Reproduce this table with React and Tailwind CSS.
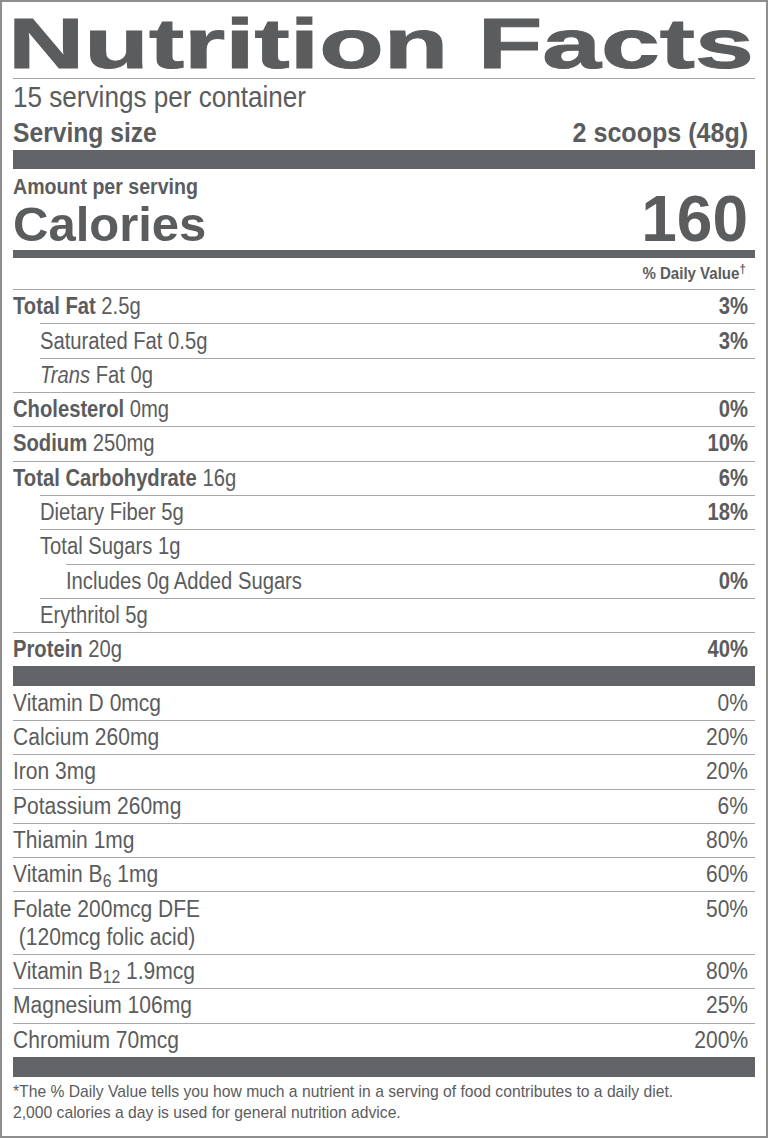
import React from "react";

// Helvetica Condensed look: Liberation Sans squeezed horizontally
const L = ({ children, className = "scale-x-[0.86]" }) => (
  <span className={`inline-block origin-left whitespace-nowrap ${className}`}>{children}</span>
);
const R = ({ children, className = "scale-x-[0.86]" }) => (
  <span className={`inline-block origin-right whitespace-nowrap ${className}`}>{children}</span>
);

const nutrients = [
  { name: "Total Fat", amount: "2.5g", dv: "3%", bold: true },
  { name: "Saturated Fat 0.5g", dv: "3%", indent: 1 },
  { name: "Trans", italic: true, amount: "Fat 0g", indent: 1 },
  { name: "Cholesterol", amount: "0mg", dv: "0%", bold: true },
  { name: "Sodium", amount: "250mg", dv: "10%", bold: true },
  { name: "Total Carbohydrate", amount: "16g", dv: "6%", bold: true },
  { name: "Dietary Fiber 5g", dv: "18%", indent: 1 },
  { name: "Total Sugars 1g", indent: 1 },
  { name: "Includes 0g Added Sugars", dv: "0%", indent: 2 },
  { name: "Erythritol 5g", indent: 1 },
  { name: "Protein", amount: "20g", dv: "40%", bold: true },
];

const vitamins = [
  { label: "Vitamin D 0mcg", dv: "0%" },
  { label: "Calcium 260mg", dv: "20%" },
  { label: "Iron 3mg", dv: "20%" },
  { label: "Potassium 260mg", dv: "6%" },
  { label: "Thiamin 1mg", dv: "80%" },
  { label: <>Vitamin B<sub>6</sub> 1mg</>, dv: "60%" },
  { label: "Folate 200mcg DFE", sub: "\u00a0(120mcg folic acid)", dv: "50%" },
  { label: <>Vitamin B<sub>12</sub> 1.9mcg</>, dv: "80%" },
  { label: "Magnesium 106mg", dv: "25%" },
  { label: "Chromium 70mcg", dv: "200%" },
];

const indentClass = ["ml-0", "ml-[27px]", "ml-[53px]"];

const NutrientRow = ({ item }) => (
  <div
    className={`flex justify-between items-center h-[34.3px] border-t border-[#a8a8a8] pr-[7px] ${indentClass[item.indent || 0]}`}
  >
    <L>
      {item.bold ? (
        <span className="font-bold">{item.name}</span>
      ) : item.italic ? (
        <span className="italic">{item.name}</span>
      ) : (
        item.name
      )}
      {item.amount && ` ${item.amount}`}
    </L>
    {item.dv && <R className="scale-x-[0.86] font-bold">{item.dv}</R>}
  </div>
);

const App = () => {
  return (
    <div className="w-[768px] h-[1138px] bg-white border-2 border-[#8e8e8e] px-[11px] text-[#5b5c5e] font-['Liberation_Sans',Arial,sans-serif] overflow-hidden">
      <div className="mt-[7px] h-[70px] border-b border-[#a8a8a8]">
        <div className="-ml-[5px] font-bold text-[70px] leading-[70px] scale-x-[1.51] origin-left whitespace-nowrap [-webkit-text-stroke:1px_#5b5c5e]">
          Nutrition Facts
        </div>
      </div>

      <div className="text-[29px] leading-[36.6px]">
        <L className="scale-x-[0.9]">15 servings per container</L>
      </div>
      <div className="flex justify-between text-[28px] leading-[34.4px] font-bold pr-[7px]">
        <L className="scale-x-[0.88]">Serving size</L>
        <R className="scale-x-[0.895]">2 scoops (48g)</R>
      </div>

      <div className="h-[19px] bg-[#636467]" />

      <div className="mt-[6.7px] text-[22px] leading-[21px] font-bold">
        <L className="scale-x-[0.89]">Amount per serving</L>
      </div>
      <div className="-mt-[3.5px] flex justify-between items-baseline pr-[7px] font-bold leading-[52px]">
        <span className="text-[49px]">Calories</span>
        <span className="text-[64px]">160</span>
      </div>

      <div className="h-[8px] bg-[#636467]" />

      <div className="text-right text-[17px] leading-[31px] font-bold pr-[9px]">
        <R className="scale-x-[0.885]">
          % Daily Value<sup>†</sup>
        </R>
      </div>

      <div className="text-[23.5px]">
        {nutrients.map((item, index) => (
          <NutrientRow key={index} item={item} />
        ))}
      </div>

      <div className="h-[20px] bg-[#636467]" />

      <div className="text-[23.5px]">
        {vitamins.map((v, index) => (
          <div
            key={index}
            className={`flex justify-between pr-[7px] ${index > 0 ? "border-t border-[#a8a8a8]" : ""} ${
              v.sub
                ? "h-[62.5px] pt-[3px] leading-[28px]"
                : index === 0
                ? "h-[33.5px] items-center"
                : "h-[34.3px] items-center"
            }`}
          >
            <span>
              <L className="scale-x-[0.895]">{v.label}</L>
              {v.sub && (
                <span className="block">
                  <L className="scale-x-[0.895]">{v.sub}</L>
                </span>
              )}
            </span>
            <span>
              <R className="scale-x-[0.895]">{v.dv}</R>
            </span>
          </div>
        ))}
      </div>

      <div className="h-[20px] bg-[#636467]" />

      <div className="pt-[4.6px] text-[17px] leading-[21px]">
        <p>
          <L className="scale-x-[0.922]">
            *The % Daily Value tells you how much a nutrient in a serving of food contributes to a daily diet.
          </L>
        </p>
        <p>
          <L className="scale-x-[0.922]">2,000 calories a day is used for general nutrition advice.</L>
        </p>
      </div>
    </div>
  );
};

export default App;
